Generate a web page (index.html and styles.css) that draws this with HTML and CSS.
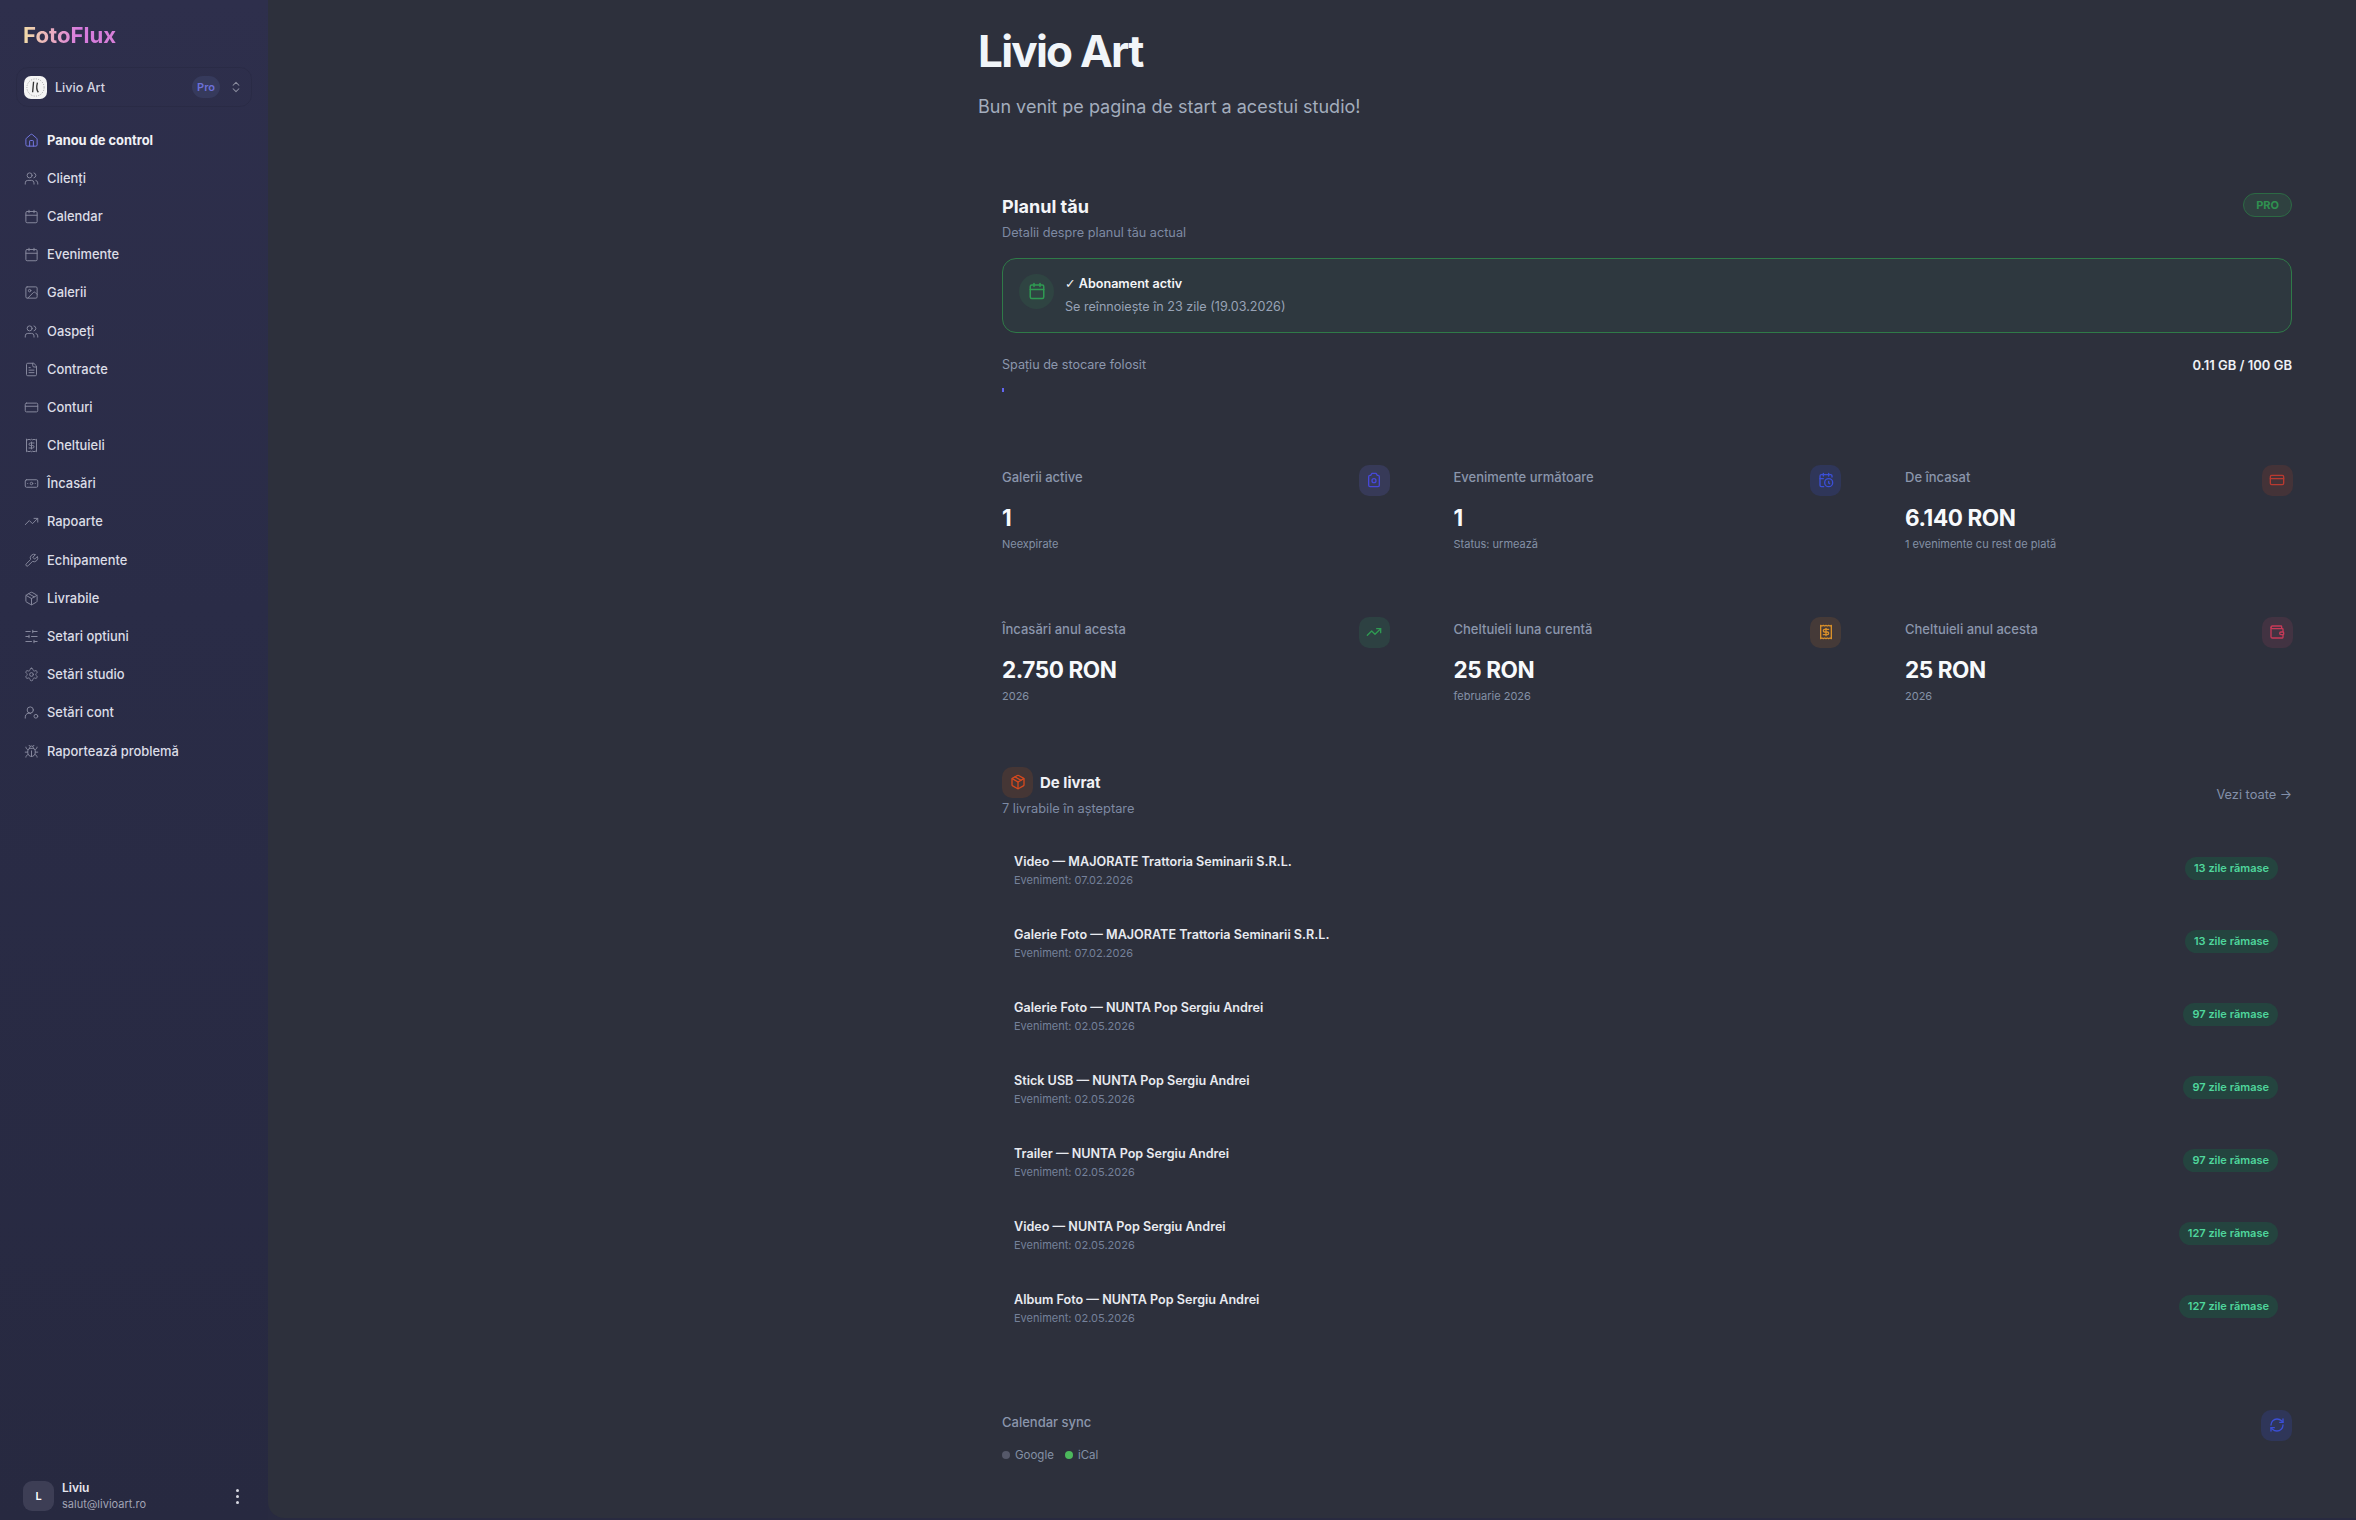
FILE: index.html
```html
<!DOCTYPE html>
<html lang="ro">
<head>
  <meta charset="UTF-8">
  <title>FotoFlux - Livio Art</title>
  <link rel="stylesheet" href="styles.css">
</head>
<body>
  <svg class="icon-defs" xmlns="http://www.w3.org/2000/svg">
    <symbol id="i-home" viewBox="0 0 24 24"><path d="M15 21v-8a1 1 0 0 0-1-1h-4a1 1 0 0 0-1 1v8"/><path d="M3 10a2 2 0 0 1 .709-1.528l7-5.999a2 2 0 0 1 2.582 0l7 5.999A2 2 0 0 1 21 10v9a2 2 0 0 1-2 2H5a2 2 0 0 1-2-2z"/></symbol>
    <symbol id="i-users" viewBox="0 0 24 24"><path d="M16 21v-2a4 4 0 0 0-4-4H6a4 4 0 0 0-4 4v2"/><circle cx="9" cy="7" r="4"/><path d="M22 21v-2a4 4 0 0 0-3-3.87"/><path d="M16 3.13a4 4 0 0 1 0 7.75"/></symbol>
    <symbol id="i-calendar" viewBox="0 0 24 24"><path d="M8 2v4"/><path d="M16 2v4"/><rect x="3" y="4" width="18" height="18" rx="2"/><path d="M3 10h18"/></symbol>
    <symbol id="i-image" viewBox="0 0 24 24"><rect x="3" y="3" width="18" height="18" rx="2"/><circle cx="9" cy="9" r="2"/><path d="m21 15-3.086-3.086a2 2 0 0 0-2.828 0L6 21"/></symbol>
    <symbol id="i-file" viewBox="0 0 24 24"><path d="M15 2H6a2 2 0 0 0-2 2v16a2 2 0 0 0 2 2h12a2 2 0 0 0 2-2V7z"/><path d="M14 2v4a2 2 0 0 0 2 2h4"/><path d="M10 9H8"/><path d="M16 13H8"/><path d="M16 17H8"/></symbol>
    <symbol id="i-card" viewBox="0 0 24 24"><rect x="2" y="5" width="20" height="14" rx="2"/><path d="M2 10h20"/></symbol>
    <symbol id="i-receipt" viewBox="0 0 24 24"><path d="M4 2v20l2-1 2 1 2-1 2 1 2-1 2 1 2-1 2 1V2l-2 1-2-1-2 1-2-1-2 1-2-1-2 1Z"/><path d="M16 8h-6a2 2 0 1 0 0 4h4a2 2 0 1 1 0 4H8"/><path d="M12 17.5v-11"/></symbol>
    <symbol id="i-banknote" viewBox="0 0 24 24"><rect x="2" y="6" width="20" height="12" rx="2"/><circle cx="12" cy="12" r="2"/><path d="M6 12h.01M18 12h.01"/></symbol>
    <symbol id="i-trend" viewBox="0 0 24 24"><polyline points="22 7 13.5 15.5 8.5 10.5 2 17"/><polyline points="16 7 22 7 22 13"/></symbol>
    <symbol id="i-wrench" viewBox="0 0 24 24"><path d="M14.7 6.3a1 1 0 0 0 0 1.4l1.6 1.6a1 1 0 0 0 1.4 0l3.77-3.77a6 6 0 0 1-7.94 7.94l-6.91 6.91a2.12 2.12 0 0 1-3-3l6.91-6.91a6 6 0 0 1 7.94-7.94l-3.76 3.76z"/></symbol>
    <symbol id="i-package" viewBox="0 0 24 24"><path d="M21 8a2 2 0 0 0-1-1.73l-7-4a2 2 0 0 0-2 0l-7 4A2 2 0 0 0 3 8v8a2 2 0 0 0 1 1.73l7 4a2 2 0 0 0 2 0l7-4A2 2 0 0 0 21 16Z"/><path d="m3.3 7 8.7 5 8.7-5"/><path d="M12 22V12"/><path d="m7.5 4.27 9 5.15"/></symbol>
    <symbol id="i-sliders" viewBox="0 0 24 24"><path d="M21 4h-7M10 4H3M21 12h-9M8 12H3M21 20h-5M12 20H3M14 2v4M8 10v4M16 18v4"/></symbol>
    <symbol id="i-gear" viewBox="0 0 24 24"><path d="M12.22 2h-.44a2 2 0 0 0-2 2v.18a2 2 0 0 1-1 1.73l-.43.25a2 2 0 0 1-2 0l-.15-.08a2 2 0 0 0-2.73.73l-.22.38a2 2 0 0 0 .73 2.73l.15.1a2 2 0 0 1 1 1.72v.51a2 2 0 0 1-1 1.74l-.15.09a2 2 0 0 0-.73 2.73l.22.38a2 2 0 0 0 2.73.73l.15-.08a2 2 0 0 1 2 0l.43.25a2 2 0 0 1 1 1.73V20a2 2 0 0 0 2 2h.44a2 2 0 0 0 2-2v-.18a2 2 0 0 1 1-1.73l.43-.25a2 2 0 0 1 2 0l.15.08a2 2 0 0 0 2.73-.73l.22-.39a2 2 0 0 0-.73-2.73l-.15-.08a2 2 0 0 1-1-1.74v-.5a2 2 0 0 1 1-1.74l.15-.09a2 2 0 0 0 .73-2.73l-.22-.38a2 2 0 0 0-2.73-.73l-.15.08a2 2 0 0 1-2 0l-.43-.25a2 2 0 0 1-1-1.73V4a2 2 0 0 0-2-2z"/><circle cx="12" cy="12" r="3"/></symbol>
    <symbol id="i-usercog" viewBox="0 0 24 24"><path d="M2 21v-2a6 6 0 0 1 9-5.2"/><circle cx="10" cy="8" r="5"/><circle cx="19" cy="18" r="3"/></symbol>
    <symbol id="i-bug" viewBox="0 0 24 24"><path d="m8 2 1.88 1.88M14.12 3.88 16 2M9 7.13v-1a3 3 0 1 1 6 0v1"/><path d="M12 20c-3.3 0-6-2.7-6-6v-3a4 4 0 0 1 4-4h4a4 4 0 0 1 4 4v3c0 3.3-2.7 6-6 6"/><path d="M12 20v-9M6.53 9C4.6 8.8 3 7.1 3 5M6 13H2M3 21c0-2.1 1.7-3.9 3.8-4M20.97 5c0 2.1-1.6 3.8-3.5 4M22 13h-4M17.2 17c2.1.1 3.8 1.9 3.8 4"/></symbol>
    <symbol id="i-chevrons" viewBox="0 0 24 24"><path d="m7 15 5 5 5-5"/><path d="m7 9 5-5 5 5"/></symbol>
    <symbol id="i-camera" viewBox="0 0 24 24"><path d="M9 2h6l2 3h1a2 2 0 0 1 2 2v13a2 2 0 0 1-2 2H6a2 2 0 0 1-2-2V7a2 2 0 0 1 2-2h1z"/><circle cx="12" cy="13" r="3"/></symbol>
    <symbol id="i-calclock" viewBox="0 0 24 24"><path d="M21 7.5V6a2 2 0 0 0-2-2H5a2 2 0 0 0-2 2v14a2 2 0 0 0 2 2h3.5"/><path d="M16 2v4M8 2v4M3 10h5"/><path d="M17.5 17.5 16 16.3V14"/><circle cx="16" cy="16" r="6"/></symbol>
    <symbol id="i-wallet" viewBox="0 0 24 24"><path d="M19 7V4a1 1 0 0 0-1-1H5a2 2 0 0 0 0 4h15a1 1 0 0 1 1 1v4h-3a2 2 0 0 0 0 4h3a1 1 0 0 0 1-1v-2a1 1 0 0 0-1-1"/><path d="M3 5v14a2 2 0 0 0 2 2h15a1 1 0 0 0 1-1v-4"/></symbol>
    <symbol id="i-sync" viewBox="0 0 24 24"><path d="M3 12a9 9 0 0 1 9-9 9.75 9.75 0 0 1 6.74 2.74L21 8"/><path d="M21 3v5h-5"/><path d="M21 12a9 9 0 0 1-9 9 9.75 9.75 0 0 1-6.74-2.74L3 16"/><path d="M8 16H3v5"/></symbol>
  </svg>

  <div class="app">
    <aside class="sidebar">
      <div class="logo">FotoFlux</div>

      <div class="studio-switch">
        <span class="studio-avatar">
          <svg viewBox="0 0 24 24"><circle cx="12" cy="12" r="9" fill="none" stroke="#9a9a9a" stroke-width="1" stroke-dasharray="1 1.5"/><path d="M10 6 9 17M14 7c-1 4-1 8 1 10" fill="none" stroke="#333" stroke-width="1.4"/></svg>
        </span>
        <span class="studio-name">Livio Art</span>
        <span class="studio-plan">Pro</span>
        <svg class="icon chevrons"><use href="#i-chevrons"/></svg>
      </div>

      <nav class="nav">
        <a class="nav-item active"><svg class="icon"><use href="#i-home"/></svg>Panou de control</a>
        <a class="nav-item"><svg class="icon"><use href="#i-users"/></svg>Clienți</a>
        <a class="nav-item"><svg class="icon"><use href="#i-calendar"/></svg>Calendar</a>
        <a class="nav-item"><svg class="icon"><use href="#i-calendar"/></svg>Evenimente</a>
        <a class="nav-item"><svg class="icon"><use href="#i-image"/></svg>Galerii</a>
        <a class="nav-item"><svg class="icon"><use href="#i-users"/></svg>Oaspeți</a>
        <a class="nav-item"><svg class="icon"><use href="#i-file"/></svg>Contracte</a>
        <a class="nav-item"><svg class="icon"><use href="#i-card"/></svg>Conturi</a>
        <a class="nav-item"><svg class="icon"><use href="#i-receipt"/></svg>Cheltuieli</a>
        <a class="nav-item"><svg class="icon"><use href="#i-banknote"/></svg>Încasări</a>
        <a class="nav-item"><svg class="icon"><use href="#i-trend"/></svg>Rapoarte</a>
        <a class="nav-item"><svg class="icon"><use href="#i-wrench"/></svg>Echipamente</a>
        <a class="nav-item"><svg class="icon"><use href="#i-package"/></svg>Livrabile</a>
        <a class="nav-item"><svg class="icon"><use href="#i-sliders"/></svg>Setari optiuni</a>
        <a class="nav-item"><svg class="icon"><use href="#i-gear"/></svg>Setări studio</a>
        <a class="nav-item"><svg class="icon"><use href="#i-usercog"/></svg>Setări cont</a>
        <a class="nav-item"><svg class="icon"><use href="#i-bug"/></svg>Raportează problemă</a>
      </nav>

      <div class="user">
        <span class="user-avatar">L</span>
        <div class="user-info">
          <div class="user-name">Liviu</div>
          <div class="user-mail">salut@livioart.ro</div>
        </div>
        <span class="user-menu"><i></i><i></i><i></i></span>
      </div>
    </aside>

    <main class="main">
      <div class="content">
        <h1>Livio Art</h1>
        <p class="welcome">Bun venit pe pagina de start a acestui studio!</p>

        <section class="plan">
          <div class="plan-head">
            <div>
              <h2>Planul tău</h2>
              <p class="plan-sub">Detalii despre planul tău actual</p>
            </div>
            <span class="plan-badge">PRO</span>
          </div>
          <div class="sub-box">
            <span class="sub-icon"><svg class="icon"><use href="#i-calendar"/></svg></span>
            <div>
              <div class="sub-title"><span class="check">✓</span> Abonament activ</div>
              <div class="sub-date">Se reînnoiește în 23 zile (19.03.2026)</div>
            </div>
          </div>
          <div class="storage">
            <span class="storage-label">Spațiu de stocare folosit</span>
            <span class="storage-value">0.11 GB / 100 GB</span>
          </div>
          <div class="storage-bar"><div class="storage-fill"></div></div>
        </section>

        <section class="stats">
          <div class="stat">
            <div class="stat-top"><span class="stat-label">Galerii active</span><span class="stat-icon indigo"><svg class="icon"><use href="#i-camera"/></svg></span></div>
            <div class="stat-value">1</div>
            <div class="stat-sub">Neexpirate</div>
          </div>
          <div class="stat">
            <div class="stat-top"><span class="stat-label">Evenimente următoare</span><span class="stat-icon blue"><svg class="icon"><use href="#i-calclock"/></svg></span></div>
            <div class="stat-value">1</div>
            <div class="stat-sub">Status: urmează</div>
          </div>
          <div class="stat">
            <div class="stat-top"><span class="stat-label">De încasat</span><span class="stat-icon red"><svg class="icon"><use href="#i-card"/></svg></span></div>
            <div class="stat-value">6.140 RON</div>
            <div class="stat-sub">1 evenimente cu rest de plată</div>
          </div>
          <div class="stat">
            <div class="stat-top"><span class="stat-label">Încasări anul acesta</span><span class="stat-icon green"><svg class="icon"><use href="#i-trend"/></svg></span></div>
            <div class="stat-value">2.750 RON</div>
            <div class="stat-sub">2026</div>
          </div>
          <div class="stat">
            <div class="stat-top"><span class="stat-label">Cheltuieli luna curentă</span><span class="stat-icon amber"><svg class="icon"><use href="#i-receipt"/></svg></span></div>
            <div class="stat-value">25 RON</div>
            <div class="stat-sub">februarie 2026</div>
          </div>
          <div class="stat">
            <div class="stat-top"><span class="stat-label">Cheltuieli anul acesta</span><span class="stat-icon rose"><svg class="icon"><use href="#i-wallet"/></svg></span></div>
            <div class="stat-value">25 RON</div>
            <div class="stat-sub">2026</div>
          </div>
        </section>

        <section class="deliver">
          <div class="deliver-head">
            <div>
              <div class="deliver-title">
                <span class="stat-icon orange"><svg class="icon"><use href="#i-package"/></svg></span>
                <h3>De livrat</h3>
              </div>
              <p class="deliver-sub">7 livrabile în așteptare</p>
            </div>
            <a class="see-all">Vezi toate →</a>
          </div>
          <div class="deliver-list">
            <div class="deliver-item">
              <div><div class="item-title">Video — MAJORATE Trattoria Seminarii S.R.L.</div><div class="item-date">Eveniment: 07.02.2026</div></div>
              <span class="days">13 zile rămase</span>
            </div>
            <div class="deliver-item">
              <div><div class="item-title">Galerie Foto — MAJORATE Trattoria Seminarii S.R.L.</div><div class="item-date">Eveniment: 07.02.2026</div></div>
              <span class="days">13 zile rămase</span>
            </div>
            <div class="deliver-item">
              <div><div class="item-title">Galerie Foto — NUNTA Pop Sergiu Andrei</div><div class="item-date">Eveniment: 02.05.2026</div></div>
              <span class="days">97 zile rămase</span>
            </div>
            <div class="deliver-item">
              <div><div class="item-title">Stick USB — NUNTA Pop Sergiu Andrei</div><div class="item-date">Eveniment: 02.05.2026</div></div>
              <span class="days">97 zile rămase</span>
            </div>
            <div class="deliver-item">
              <div><div class="item-title">Trailer — NUNTA Pop Sergiu Andrei</div><div class="item-date">Eveniment: 02.05.2026</div></div>
              <span class="days">97 zile rămase</span>
            </div>
            <div class="deliver-item">
              <div><div class="item-title">Video — NUNTA Pop Sergiu Andrei</div><div class="item-date">Eveniment: 02.05.2026</div></div>
              <span class="days">127 zile rămase</span>
            </div>
            <div class="deliver-item">
              <div><div class="item-title">Album Foto — NUNTA Pop Sergiu Andrei</div><div class="item-date">Eveniment: 02.05.2026</div></div>
              <span class="days">127 zile rămase</span>
            </div>
          </div>
        </section>

        <section class="sync">
          <div>
            <div class="stat-label">Calendar sync</div>
            <div class="sync-list">
              <span class="sync-item"><i class="dot off"></i>Google</span>
              <span class="sync-item"><i class="dot on"></i>iCal</span>
            </div>
          </div>
          <span class="stat-icon blue"><svg class="icon"><use href="#i-sync"/></svg></span>
        </section>
      </div>
    </main>
  </div>
</body>
</html>
```

FILE: styles.css
```css
* {
  box-sizing: border-box;
}

html, body {
  height: 100%;
}

body {
  margin: 0;
  font-family: Inter, 'Liberation Sans', sans-serif;
  background: #282a40;
  color: #fff;
  overflow: hidden;
}

h1, h2, h3, p {
  margin: 0;
}

.icon-defs {
  display: none;
}

.icon {
  width: 16px;
  height: 16px;
  fill: none;
  stroke: currentColor;
  stroke-width: 2;
  stroke-linecap: round;
  stroke-linejoin: round;
  flex: none;
}

.app {
  display: flex;
  height: 100vh;
}

/* sidebar */
.sidebar {
  width: 268px;
  flex: none;
  display: flex;
  flex-direction: column;
  padding: 0 16px 0;
  background: linear-gradient(to bottom, #2e2f4c, #2a2c47 40%, #272940);
}

.logo {
  margin: 21px 0 0 7px;
  font-size: 22.2px;
  line-height: 28px;
  font-weight: 700;
  background: linear-gradient(90deg, #f2dca8 0%, #e9a6c4 35%, #d67ade 60%, #d77fd8 100%);
  -webkit-background-clip: text;
  background-clip: text;
  -webkit-text-fill-color: transparent;
  width: fit-content;
}

.studio-switch {
  display: flex;
  align-items: center;
  height: 40px;
  margin: 18px 0 0;
  padding: 0 8px 0 7px;
  border-radius: 12px;
  border: 1px solid rgba(0, 0, 0, 0.07);
  font-size: 12.6px;
  font-weight: 500;
  color: #d5d6e0;
}

.studio-avatar {
  width: 23px;
  height: 23px;
  border-radius: 7px;
  background: #f4f4f4;
  display: flex;
}

.studio-name {
  margin-left: 8px;
  flex: 1;
}

.studio-plan {
  font-size: 11px;
  font-weight: 600;
  color: #6c70d8;
  background: #363a5c;
  padding: 4px 5px;
  border-radius: 11px;
  line-height: 14px;
}

.chevrons {
  margin-left: 9px;
  width: 14px;
  height: 16px;
  color: #8b8d9f;
  stroke-width: 1.8;
}

.nav {
  margin-top: 14px;
  display: flex;
  flex-direction: column;
}

.nav-item {
  display: flex;
  align-items: center;
  gap: 8px;
  height: 38.2px;
  padding-left: 8px;
  font-size: 12.9px;
  font-weight: 500;
  color: #dcdde6;
}

.nav-item .icon {
  width: 15px;
  height: 15px;
  color: #85879c;
  stroke-width: 1.6;
}

.nav-item.active {
  font-weight: 700;
  color: #f1f1f6;
}

.nav-item.active .icon {
  color: #7377e0;
}

.user {
  margin-top: auto;
  display: flex;
  align-items: center;
  gap: 8px;
  padding: 0 8px 8px 7px;
}

.user-avatar {
  width: 31px;
  height: 30px;
  border-radius: 9px;
  background: #3d3e55;
  display: flex;
  align-items: center;
  justify-content: center;
  font-size: 11px;
  font-weight: 600;
}

.user-info {
  flex: 1;
}

.user-name {
  font-size: 12px;
  font-weight: 600;
  line-height: 16px;
  color: #e6e6ee;
}

.user-mail {
  font-size: 11px;
  line-height: 16px;
  color: #a2a3b4;
}

.user-menu {
  display: flex;
  flex-direction: column;
  gap: 3px;
  margin-right: 5px;
}

.user-menu i {
  width: 3px;
  height: 3px;
  border-radius: 50%;
  background: #d8d9e2;
}

/* main */
.main {
  flex: 1;
  height: calc(100vh - 2px);
  background: #2d303c;
  border-bottom-left-radius: 16px;
  overflow: hidden;
}

.content {
  width: 1338px;
  margin-left: 710px;
}

h1 {
  margin-top: 25px;
  font-size: 44px;
  line-height: 52px;
  font-weight: 700;
  letter-spacing: -1.75px;
  color: #f1f5f9;
}

.welcome {
  margin-top: 17px;
  font-size: 18px;
  line-height: 26px;
  color: #a3adbd;
}

.plan {
  padding: 0 24px;
  margin-top: 75px;
}

.plan-head {
  display: flex;
  justify-content: space-between;
  align-items: flex-start;
}

h2 {
  font-size: 18px;
  line-height: 24px;
  font-weight: 700;
  color: #f4f5f8;
}

.plan-sub {
  margin-top: 4.5px;
  font-size: 12.7px;
  line-height: 18px;
  color: #7e8aa3;
}

.plan-badge {
  margin-top: -2px;
  font-size: 11px;
  font-weight: 700;
  line-height: 22px;
  padding: 0 12px;
  border-radius: 12px;
  color: #2f9150;
  background: #2f4140;
  border: 1px solid #2c6a44;
}

.sub-box {
  margin-top: 16px;
  height: 75px;
  display: flex;
  align-items: center;
  gap: 11px;
  padding: 0 16px;
  border: 1px solid #2f7a48;
  border-radius: 14px;
  background: #2e383f;
}

.sub-icon {
  width: 35px;
  height: 35px;
  margin-bottom: 8px;
  border-radius: 50%;
  background: #2f4442;
  color: #2f9a52;
  display: flex;
  align-items: center;
  justify-content: center;
}

.sub-icon .icon {
  width: 18px;
  height: 18px;
}

.sub-title {
  font-size: 12.6px;
  font-weight: 600;
  line-height: 18px;
  color: #f4f5f8;
}

.check {
  font-family: 'DejaVu Sans', sans-serif;
  font-weight: 400;
}

.sub-date {
  margin-top: 5px;
  font-size: 12.6px;
  line-height: 18px;
  color: #98a3b6;
}

.storage {
  margin-top: 23px;
  display: flex;
  justify-content: space-between;
  align-items: center;
  font-size: 12.6px;
  line-height: 18px;
}

.storage-label {
  color: #8c97ad;
}

.storage-value {
  font-weight: 600;
  font-size: 13px;
  color: #eef0f5;
}

.storage-bar {
  margin-top: 14px;
  height: 5px;
}

.storage-fill {
  width: 2px;
  height: 4px;
  background: #6366f1;
}

.stats {
  margin-top: 72px;
  padding: 0 24px;
  display: grid;
  grid-template-columns: repeat(3, 387.5px);
  column-gap: 64px;
  row-gap: 0;
}

.stat {
  height: 152px;
}

.stat-top {
  display: flex;
  justify-content: space-between;
  align-items: flex-start;
}

.stat-label {
  margin-top: 3.5px;
  font-size: 13px;
  line-height: 18px;
  font-weight: 500;
  color: #8b96ac;
}

.stat-icon {
  width: 31px;
  height: 31px;
  border-radius: 10px;
  display: flex;
  align-items: center;
  justify-content: center;
}

.stat-icon .icon {
  stroke-width: 2;
}

.stat-icon.indigo { background: #373a58; color: #4648d8; }
.stat-icon.blue { background: #2f3659; color: #3b4fd6; }
.stat-icon.red { background: #443338; color: #b93a30; }
.stat-icon.green { background: #2d4142; color: #2f9a52; }
.stat-icon.amber { background: #453a38; color: #d9902a; }
.stat-icon.rose { background: #423342; color: #c73a58; }
.stat-icon.orange { background: #453635; color: #d4491f; }

.stat-value {
  margin-top: 6px;
  font-size: 22.5px;
  line-height: 32px;
  font-weight: 700;
  letter-spacing: -0.4px;
  color: #f8fafc;
}

.stat-sub {
  margin-top: 2px;
  font-size: 11px;
  line-height: 16px;
  color: #8490a6;
}

.deliver {
  margin-top: -2px;
  padding: 0 24px;
}

.deliver-head {
  display: flex;
  justify-content: space-between;
  align-items: center;
}

.deliver-title {
  display: flex;
  align-items: center;
  gap: 7px;
}

h3 {
  font-size: 15px;
  font-weight: 700;
  color: #f0f1f6;
}

.deliver-sub {
  margin-top: 2px;
  font-size: 12.8px;
  line-height: 18px;
  color: #7e8aa3;
}

.see-all {
  margin-top: 5px;
  font-size: 12.8px;
  color: #8490aa;
}

.deliver-list {
  margin-top: 23px;
}

.deliver-item {
  height: 73px;
  padding: 11px 14px 0 12px;
  display: flex;
  justify-content: space-between;
  align-items: flex-start;
}

.item-title {
  font-size: 12.6px;
  line-height: 20px;
  font-weight: 600;
  color: #e8eaf0;
}

.item-date {
  font-size: 11px;
  line-height: 16px;
  color: #75819a;
}

.days {
  margin-top: 5.5px;
  font-size: 11px;
  line-height: 23px;
  font-weight: 600;
  padding: 0 9px;
  border-radius: 12px;
  color: #4fd69c;
  background: #24443f;
}

.sync {
  margin-top: 58px;
  padding: 0 24px;
  display: flex;
  justify-content: space-between;
  align-items: flex-start;
}

.sync-list {
  margin-top: 16px;
  display: flex;
  gap: 11px;
}

.sync-item {
  display: flex;
  align-items: center;
  gap: 5px;
  font-size: 11.5px;
  line-height: 16px;
  color: #8490a6;
}

.dot {
  width: 8px;
  height: 8px;
  border-radius: 50%;
}

.dot.off { background: #555869; }
.dot.on { background: #4cb85c; }
```
